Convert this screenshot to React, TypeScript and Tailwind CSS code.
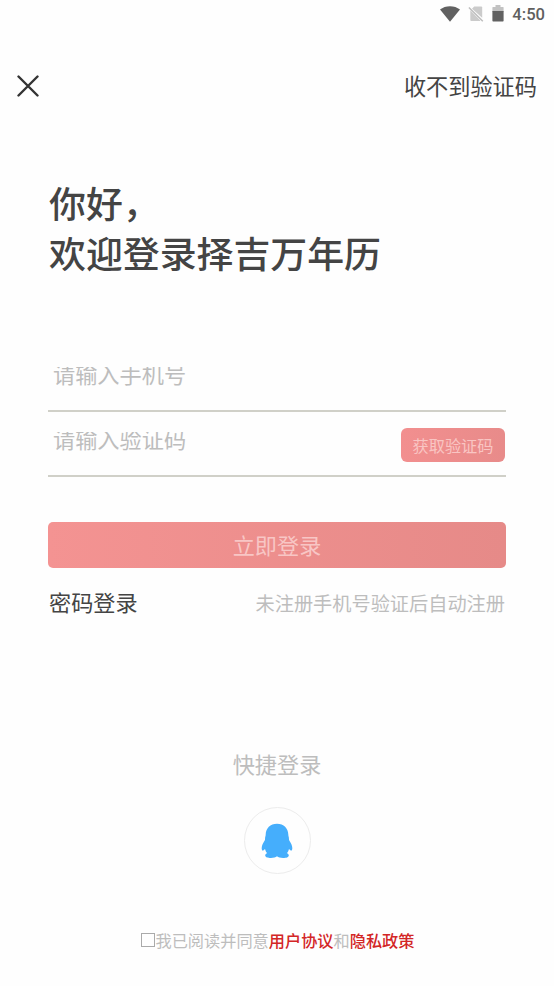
import type { ReactNode } from "react";

function StatusBar() {
  return (
    <div className="flex h-[29px] items-center justify-end pr-[9px] text-[#5f5f5f]">
      <svg width="20" height="16" viewBox="0 0 20 16" className="mr-[8px] mb-[2px]">
        <path d="M0 3.6C2.8 1.5 6.2.3 10 .3s7.200 1.200 10 3.300L10 15.700Z" fill="#616161" />
      </svg>
      <svg width="16" height="16" viewBox="0 0 16 16" className="mr-[8px] mb-[2px]">
        <path d="M6.200.5h7q1 0 1 1v10.300L4 2.700Z" fill="#cbcbcb" />
        <path d="M2.300 4.300 12.300 14.500q-.4.5-1 .5H3.300q-1 0-1-1Z" fill="#cbcbcb" />
        <path d="M.9 1.500 14.800 15.300" stroke="#bdbdbd" strokeWidth="1.500" />
      </svg>
      <svg width="12" height="17" viewBox="0 0 12 17" className="mr-2 mb-[2px]">
        <path d="M3.500 0h5v2H11q.6 0 .6.600V7H.4V2.600Q.4 2 1 2h2.500Z" fill="#c2c2c2" />
        <path d="M.4 6h11.200v9.800q0 .7-.7.700H1.100q-.7 0-.7-.7Z" fill="#616161" />
      </svg>
      <span className="pt-[2px] font-['Roboto',sans-serif] text-[16.6px] leading-none font-medium">4:50</span>
    </div>
  );
}

function Field({ placeholder, children }: { placeholder: string; children?: ReactNode }) {
  return (
    <div className="flex h-[65px] items-start justify-between border-b-2 border-[#d0d0c8]">
      <div className="mt-[20px] ml-[5px] h-6 w-[300px] overflow-hidden">
        <input
          placeholder={placeholder}
          className="-mt-[10px] block h-8 w-full bg-transparent text-[22.2px] leading-8 outline-none placeholder:text-[#bdbdbd]"
        />
      </div>
      {children}
    </div>
  );
}

function QQIcon() {
  return (
    <svg width="32" height="36" viewBox="0 0 32 36" fill="#45aefc">
      <path d="M16 .8C9.200.8 4.800 5.400 4.700 11.600c0 1.400-.5 2-.6 3.200-.1 1 .1 1.700-.4 2.700C2 20 .7 22.500.7 25c0 1.500.3 2.600 1 2.600.8 0 1.600-.7 2.300-1.500.3 1.500 1 3 2.100 4.200-1.200.4-1.900 1.200-1.900 2.200 0 1.700 2.600 2.500 5.700 2.500 2.600 0 4.900-.6 6.100-1.700 1.200 1.100 3.500 1.700 6.100 1.700 3.100 0 5.700-.8 5.700-2.500 0-1-.7-1.800-1.900-2.200 1.100-1.200 1.800-2.700 2.100-4.200.7.800 1.500 1.500 2.300 1.500.7 0 1-1.100 1-2.600 0-2.500-1.300-5-3-7.500-.5-1-.3-1.700-.4-2.700-.1-1.200-.6-1.800-.6-3.200C27.200 5.400 22.800.8 16 .8Z" />
    </svg>
  );
}

export default function App() {
  return (
    <div className="flex h-[986px] w-[554px] flex-col overflow-hidden bg-[#fefefe] font-['Noto_Sans_CJK_SC',sans-serif] text-[#444]">
      <StatusBar />

      <header className="mt-[26px] flex h-[60px] items-center justify-between px-[17px]">
        <button aria-label="关闭" className="mt-[2px]">
          <svg width="22" height="22" viewBox="0 0 22 22" fill="none" stroke="#333" strokeWidth="2.400" strokeLinecap="round">
            <path d="M1.500 1.500 20.500 20.500M20.500 1.500 1.500 20.500" />
          </svg>
        </button>
        <button className="text-[22.2px] leading-[30px]">收不到验证码</button>
      </header>

      <main className="flex flex-col px-12">
        <h1 className="mt-[62px] pl-px text-[36.9px] leading-[50px] font-medium">
          你好，
          <br />
          欢迎登录择吉万年历
        </h1>

        <form className="mt-[70px] flex flex-col">
          <Field placeholder="请输入手机号" />
          <Field placeholder="请输入验证码">
            <button
              type="button"
              className="mt-[16px] mr-px h-[34px] w-[104px] rounded-md bg-linear-to-r from-[#f28f8f] to-[#e88b8a] text-[16.2px] text-[#f9c5c3]"
            >
              获取验证码
            </button>
          </Field>
          <button
            type="button"
            className="mt-[45px] h-[46px] rounded-[5px] bg-linear-to-r from-[#f49392] to-[#e68a88] text-[22.15px] text-[#f8c6c5]"
          >
            立即登录
          </button>
        </form>

        <div className="mt-[19px] flex h-[30px] items-center justify-between pr-px pl-px">
          <span className="text-[22.15px]">密码登录</span>
          <span className="pt-[2px] text-[19.2px] text-[#bdbdbd]">未注册手机号验证后自动注册</span>
        </div>
      </main>

      <section className="mt-[131px] flex flex-col items-center">
        <h2 className="text-[22.15px] leading-[30px] text-[#bdbdbd]">快捷登录</h2>
        <button aria-label="QQ" className="mt-[29px] flex size-[67px] items-center justify-center rounded-full border border-[#ececec]">
          <QQIcon />
        </button>
      </section>

      <footer className="mt-[54px] flex h-6 items-center justify-center pl-px text-[16.2px] text-[#bdbdbd]">
        <span className="mr-px size-[14px] border border-[#aaa]" />
        <span>我已阅读并同意</span>
        <span className="font-medium text-[#d32626]">用户协议</span>
        <span>和</span>
        <span className="font-medium text-[#d32626]">隐私政策</span>
      </footer>
    </div>
  );
}
